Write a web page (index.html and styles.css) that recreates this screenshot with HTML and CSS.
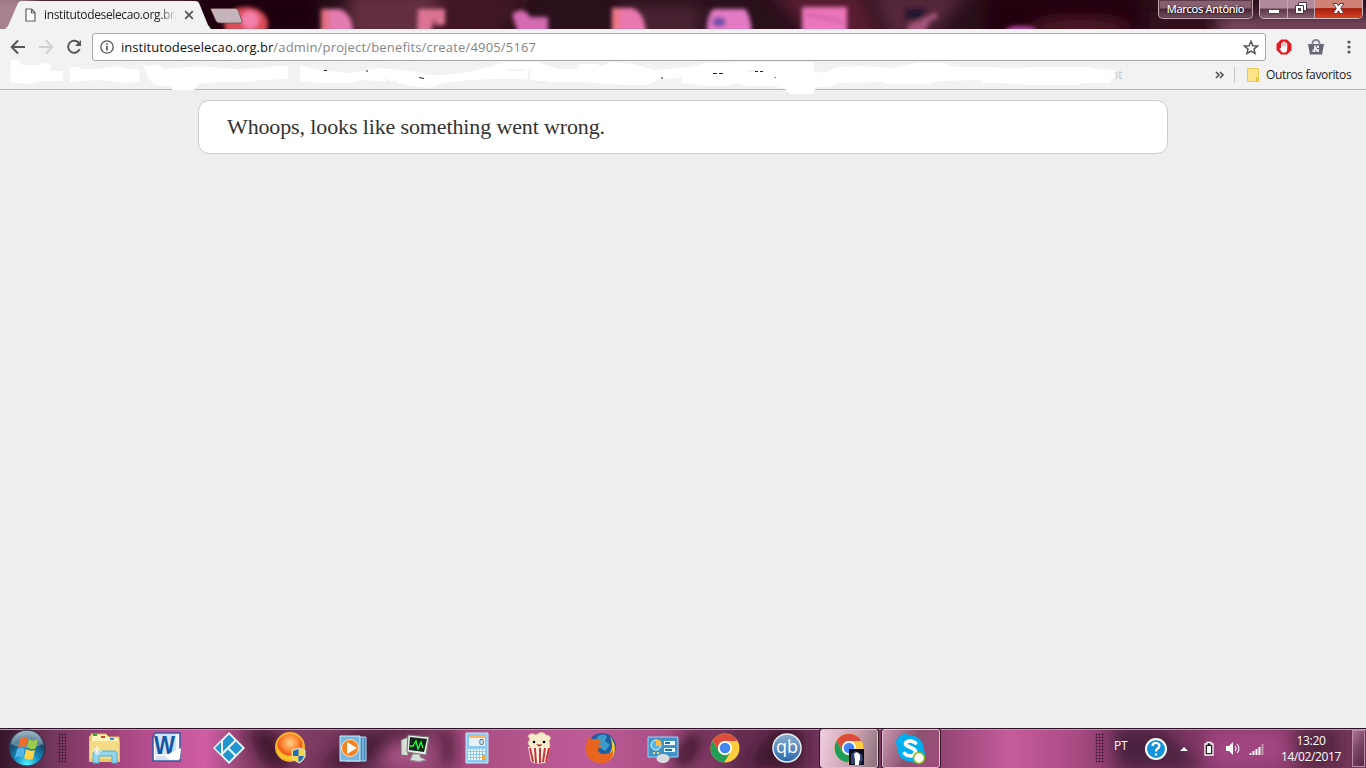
FILE: index.html
```html
<!DOCTYPE html>
<html lang="pt-BR">
<head>
<meta charset="utf-8">
<title>institutodeselecao.org.br</title>
<link rel="stylesheet" href="styles.css">
</head>
<body>
<header class="titlebar">
  <svg class="wallpaper" width="1366" height="29" viewBox="0 0 1366 29">
    <defs>
      <filter id="soft" x="-20%" y="-50%" width="140%" height="200%"><feGaussianBlur stdDeviation="2"/></filter>
      <filter id="wide" x="-20%" y="-50%" width="140%" height="200%"><feGaussianBlur stdDeviation="8"/></filter>
    </defs>
    <rect width="1366" height="29" fill="#29101b"/>
    <g filter="url(#wide)">
      <path d="M-20-10H30V40H-20z" fill="#a98291"/><path d="M30-10H200V8H30z" fill="#4c2938"/>
      <path d="M190-10H320V40H190z" fill="#1b020b"/><path d="M350-10H440L470 40H345z" fill="#642d40"/>
      <path d="M440-10H530L500 40H430z" fill="#411321"/><path d="M620 5H700V40H620z" fill="#482030"/>
      <path d="M770-10H860L880 40H815z" fill="#5a1b30"/><path d="M870-10H970L930 40H890z" fill="#55283a"/>
      <path d="M985-10H1140V40H985z" fill="#21040f"/><ellipse cx="1080" cy="29" rx="50" ry="9" fill="#521a2b"/>
      <path d="M1150 12H1250V40H1150z" fill="#34101f"/><path d="M1220 16H1380V40H1220z" fill="#794860"/>
    </g>
    <g filter="url(#soft)">
      <ellipse cx="246" cy="24" rx="22" ry="17" fill="#d94d58"/><circle cx="250" cy="20" r="9" fill="#f481ac"/>
      <path d="M321 9H340Q353 14 353 34H321z" fill="#e47caf"/><path d="M321 9H329V34H321z" fill="#e46f83"/>
      <path d="M418 9H445V25H435V17L430 34H417z" fill="#dc7594"/>
      <path d="M512 14Q524 5 530 17H548V34H518z" fill="#d46bb2"/>
      <path d="M612 8H632Q645 12 646 34H612z" fill="#e878ae"/><path d="M612 8H620V34H612z" fill="#ef7888"/>
      <path d="M713 9H745Q751 15 752 34H707Q706 16 713 9z" fill="#e47ac4"/><ellipse cx="719" cy="22" rx="7" ry="5" fill="#7150aa"/>
      <path d="M802 7H847V34H802z" fill="#ec76bb"/><path d="M806 15 824 17 843 22" stroke="#b85492" stroke-width="3" fill="none" opacity=".6"/>
      <path d="M906 9H927L920 19H905z" fill="#21182e"/><path d="M909 24 920 20 936 12 938 18 930 21 925 32H907z" fill="#a25578"/>
      <ellipse cx="1021" cy="30" rx="15" ry="4" fill="#b749a0"/>
    </g>
  </svg>
  <div class="tab">
    <svg class="tab-shape" width="214" height="29"><path d="M5 29 8 26 18 3Q19 1 22 1H195Q198 1 199 3L208 25 211 29z" fill="#f2f2f2"/></svg>
    <svg class="page-icon" width="11" height="14" viewBox="0 0 11 14"><path d="M1 1H6.500L10 4.500V13H1zM6.500 1V5H10" fill="#fff" stroke="#606060" stroke-width="1.200"/></svg>
    <span class="tab-title">institutodeselecao.org.br/</span>
    <svg class="tab-close" width="10" height="10" viewBox="0 0 10 10"><path d="M1.200 1.200 8.800 8.800M8.800 1.200 1.200 8.800" stroke="#5a5a5a" stroke-width="1.900"/></svg>
  </div>
  <svg class="new-tab" width="34" height="16"><path d="M2 .5H25Q27 .5 28 2L32 13Q33 15 30 15H10Q7 15 6 13L1 2Q0 .5 2 .5z" fill="#c5b4bb" stroke="#68434b" stroke-width=".7"/></svg>
  <div class="user-button">Marcos Antônio</div>
  <div class="window-controls">
    <span class="control minimize"><svg width="12" height="5"><path d="M.5.5H11.500V4.500H.5z" fill="#fff" stroke="#51464e"/></svg></span>
    <span class="control restore"><svg width="12" height="12"><path d="M3.500.5H11.500V8.500H3.500z" fill="#fff" stroke="#463944"/><path d="M.5 3.500H8.500V11.500H.5z" fill="#fff" stroke="#463944"/><path d="M3 6H6V9H3z" fill="#54434d"/></svg></span>
    <span class="control close"><svg width="13" height="11"><path d="M1 .5H5L6.500 3 8 .5H12L8.700 5.300 12 10.500H8L6.500 7.800 5 10.500H1L4.300 5.300z" fill="#fff" stroke="#5c4047"/></svg></span>
  </div>
</header>
<section class="browser-chrome">
  <div class="toolbar">
    <svg class="nav-icon back" width="16" height="16" viewBox="0 0 16 16"><path d="M15 8H2M8 1.500 1.700 8 8 14.500" fill="none" stroke="#555" stroke-width="2"/></svg>
    <svg class="nav-icon forward" width="16" height="16" viewBox="0 0 16 16"><path d="M1 8H14M8 1.500 14.300 8 8 14.500" fill="none" stroke="#d1d1d1" stroke-width="2"/></svg>
    <svg class="nav-icon reload" width="16" height="16" viewBox="0 0 16 16"><path d="M13.300 4.700A6 6 0 1 0 13.700 10" fill="none" stroke="#555" stroke-width="2"/><path d="M15 1V7H9z" fill="#555"/></svg>
    <div class="omnibox">
      <svg width="14" height="14" viewBox="0 0 14 14"><circle cx="7" cy="7" r="6.200" fill="none" stroke="#555" stroke-width="1.300"/><path d="M7 6V10.500M7 3.200V4.800" stroke="#555" stroke-width="1.700"/></svg>
      <span class="address">institutodeselecao.org.br<span class="address-path">/admin/project/benefits/create/4905/5167</span></span>
      <svg class="star" width="16" height="15" viewBox="0 0 16 15"><path d="M8 1.300 9.900 5.700 14.500 6 11 9.100 12.100 13.500 8 11.100 3.900 13.500 5 9.100 1.500 6 6.100 5.700z" fill="none" stroke="#555" stroke-width="1.500"/></svg>
    </div>
    <svg class="adblock" width="16" height="16" viewBox="0 0 16 16"><path d="M5 .5H11L15.500 5V11L11 15.500H5L.5 11V5z" fill="#e21b23"/><path d="M6 13.500 3.500 9.500Q3.800 8.400 5 9.500V4.500Q5.600 3.500 6.200 4.500V7.500H6.500V3Q7.200 2 7.800 3V7.500H8.200V2.800Q9 2 9.500 3V7.500H9.900V4Q10.700 3.300 11.200 4.300V10Q11 12.500 9.800 13.500z" fill="#fff"/></svg>
    <svg class="bag" width="16" height="16" viewBox="0 0 16 16"><path d="M0 5H16L14 15.500H2z" fill="#666674"/><path d="M4.500 6V4Q5 1 8 1T11.500 4V6" fill="none" stroke="#858590" stroke-width="1.800"/><path d="M6 6.500H8V8H9V6.500H11V9H9V10H11V13H8.500V11.500H7.500V13H4.500V10.500H6z" fill="#e7e7ea"/></svg>
    <svg class="dots" width="4" height="14"><circle cx="2" cy="2" r="1.600" fill="#555"/><circle cx="2" cy="7" r="1.600" fill="#555"/><circle cx="2" cy="12" r="1.600" fill="#555"/></svg>
  </div>
  <div class="bookmarks">
    <svg class="chevrons" width="10" height="8"><path d="M1 1 4 4 1 7M5 1 8 4 5 7" stroke="#555" stroke-width="1.700" fill="none"/></svg>
    <span class="divider"></span>
    <svg class="folder" width="13" height="15"><path d="M.5.5H11.500V13.500H.5z" fill="#ffe38b" stroke="#edc94f"/><path d="M9.500 9.500H11.500V13.500H9.500z" fill="#ffe388" stroke="#e8bd35"/></svg>
    <span class="bookmark-label">Outros favoritos</span>
  </div>
  <svg class="redactions" width="1366" height="100" viewBox="0 0 1366 100">
    <text x="1111" y="79" class="faint-label">ot</text>
    <g fill="#fff">
      <path d="M11 60 19 60 22 65H40L42 63 51 64V71H63L62 81H42L27 84 10 82z"/>
      <path d="M70 67H79V69H96L117 66 128 69H139L140 81 129 83 98 80 70 82z"/>
      <path d="M144 66 158 65 164 69 200 66 235 69 262 68 276 66H288V79L260 80 247 82H215L199 84 194 90H172L171 86H157L148 79z"/>
      <path d="M300 65 318 70 349 73 381 68 418 72 428 75H444L463 73 489 67 506 62 537 62 558 69H579V64H596L602 66 612 62 633 64 655 70 690 67 706 63 762 62H814V71L824 73 838 67 861 66 895 68 917 63H945L954 67 990 67 1014 68 1031 67 1090 67 1094 69 1114 70H1115V79H1111V83H1083L1078 85H1029L1000 83 981 83V80L940 81 928 84H888L881 82 837 83 829 87H817L812 94H790L785 89 773 86H746L738 83 726 86H704L682 83V78L661 79 648 85H622L605 84 585 82H550L520 79H493L470 80 444 83 428 88 411 86 393 82 365 80 350 83H322L300 81z"/>
    </g>
    <path d="M508 70H524M529 70V81M747 71H757M385 79Q390 84 397 81M535 81Q542 85 548 81" fill="none" stroke="#e8e8e8"/>
    <path d="M324 70.500H327M367 70V72M419 77.500 424 78.500M713 73.500H717M719 73.500H723M755 71.500H758M760 71.500H763M775 77V78M661 78H663" fill="none" stroke="#202030"/>
  </svg>
</section>
<main class="content"><h1 class="error-card"><span class="error-text">Whoops, looks like something went wrong.</span></h1></main>
<footer class="taskbar">
  <svg class="wallpaper" width="1366" height="40" viewBox="0 0 1366 40">
    <defs><linearGradient id="bar"><stop offset="0" stop-color="#34152a"/><stop offset=".035" stop-color="#70355a"/><stop offset=".09" stop-color="#a84681"/><stop offset=".15" stop-color="#d15ea5"/><stop offset=".18" stop-color="#8c426d"/><stop offset=".28" stop-color="#6d3457"/><stop offset=".34" stop-color="#a84e82"/><stop offset=".43" stop-color="#be5b97"/><stop offset=".49" stop-color="#a84e83"/><stop offset=".54" stop-color="#642d50"/><stop offset=".67" stop-color="#803b65"/><stop offset=".74" stop-color="#c65c9c"/><stop offset=".79" stop-color="#a84a82"/><stop offset=".83" stop-color="#6f315a"/><stop offset=".9" stop-color="#863b6a"/><stop offset="1" stop-color="#713657"/></linearGradient></defs>
    <rect width="1366" height="40" fill="url(#bar)"/>
    <g filter="url(#wide)"><path d="M245 0H275L295 42H265z" fill="#40162f"/><path d="M315 42 350 8 400 0H445L350 42z" fill="#4a1e38"/><path d="M390 15H428V40H380z" fill="#ab5387"/><path d="M442 0H453V40H442z" fill="#40192e"/><path d="M687 5H706L690 40H670zM745 40 773 0H803V40z" fill="#3a152b"/><path d="M1112 0H1160L1205 40H1118z" fill="#4c2040"/><path d="M1207 0H1288V40H1210z" fill="#a14580"/><path d="M1293 0H1340V40H1300z" fill="#562742"/></g>
    <path d="M0 .5H1366" stroke="#2c1025"/><path d="M0 1.500H1366" stroke="#cf8eb0"/>
  </svg>
  <svg class="start" width="40" height="40" viewBox="0 0 40 40"><defs><radialGradient id="orb" cx=".5" cy=".95" r=".95"><stop stop-color="#4df7ff"/><stop offset=".35" stop-color="#168fc5"/><stop offset=".7" stop-color="#174969"/><stop offset="1" stop-color="#91a5b5"/></radialGradient></defs><circle cx="20" cy="20" r="18" fill="url(#orb)" stroke="#332a42"/><path d="M4 16Q8 3 20 3T36 16Q20 24 4 16z" fill="#d7edf4" opacity=".35"/><path d="M13 11Q17 8 21 10L19 19Q15 17 11 20z" fill="#f16b2d"/><path d="M22 11Q26 14 31 11L29 20Q24 23 20 19z" fill="#9bcc4b"/><path d="M10 21Q14 18 18 21L16 30Q12 27 8 30z" fill="#50b6ed"/><path d="M19 21Q24 24 28 22L26 31Q21 33 17 30z" fill="#ffd34b"/></svg>
  <span class="grip"></span>
  <nav class="apps">
    <span class="app"><svg width="34" height="34" viewBox="0 0 34 34"><path d="M1 5 8 4 9 6H29L32 10V31H1z" fill="#eac765"/><path d="M3 3H18L21 6H31V27H3z" fill="#fff3ba" stroke="#d8b954"/><path d="M5 4H9" stroke="#22a634" stroke-width="2"/><path d="M13 6H17" stroke="#d84622" stroke-width="2"/><path d="M22 8H26" stroke="#2b91d3" stroke-width="2"/><path d="M2 10H31V28H2z" fill="#f3dc85"/><path d="M5 32V23Q5 20 8 20H26Q29 20 29 23V32H24V25H11V32z" fill="#91d4ec" stroke="#5aafc9"/><path d="M9 15V24M5 20H14M6 17 12 23M12 17 6 23" stroke="#fff" stroke-width="1"/></svg></span>
    <span class="app"><svg width="32" height="32" viewBox="0 0 32 32"><path d="M4 1H29V29H2V5z" fill="#f2f6fd" stroke="#365aa0" stroke-width="1.500"/><path d="M4 2H25V22H4z" fill="#d3e3f8"/><text x="3" y="22" class="word-logo" textLength="21" lengthAdjust="spacingAndGlyphs">W</text><path d="M5 25H20M5 27H18" stroke="#b7c9e6"/><path d="M14 25 19 21 30 16 29 27 20 28z" fill="#fff"/></svg></span>
    <span class="app"><svg width="32" height="32" viewBox="0 0 32 32"><path d="M16 0 32 16 16 32 0 16z" fill="#eef8fc"/><path d="M2 16 8 10V22zM10 8.500 16 2.500 21.500 8 10 19.500zM23 9.500 29.500 16 23 22.500 16.500 16zM10 22.500 15 17.500 21.500 24 16 29.500 10 23.500z" fill="#2496cf"/></svg></span>
    <span class="app"><svg width="32" height="32" viewBox="0 0 32 32"><defs><radialGradient id="sun" cx=".5" cy=".35"><stop stop-color="#ffd28b"/><stop offset=".55" stop-color="#ff8b38"/><stop offset=".85" stop-color="#ee5818"/><stop offset="1" stop-color="#ffc62a"/></radialGradient></defs><circle cx="15" cy="15" r="14" fill="url(#sun)" stroke="#f2b52b" stroke-width="2"/><path d="M17 18 24 16 30 18V25Q27 30 24 31 18 28 17 25z" fill="#f0d848" stroke="#d7dfe6"/><path d="M18 19 23.500 17V24H18zM23.500 24H29Q27 29 23.500 30z" fill="#236bbf"/></svg></span>
    <span class="app"><svg width="30" height="30" viewBox="0 0 30 30"><path d="M8 4H28V28H8z" fill="#4486ba" stroke="#a5ddf7"/><path d="M25 4V28" stroke="#a5ddf7"/><path d="M2 3H22V28H2z" fill="#78b7df" stroke="#cbedff"/><circle cx="12" cy="15" r="8.500" fill="#f58220" stroke="#ffe1bd"/><path d="M9 9 19 15 9 21z" fill="#fff"/></svg></span>
    <span class="app"><svg width="32" height="32" viewBox="0 0 32 32"><path d="M2 8 9 5V24L2 23z" fill="#d8ddd4" stroke="#696c68"/><path d="M9 3 30 5 27 23 8 20z" fill="#ebece8" stroke="#777"/><path d="M11 5 28 7 25 20 10 18z" fill="#102618"/><path d="M11 14 14 14 17 9 19 17 22 10 24 16" fill="none" stroke="#30ff38" stroke-width="1.300"/><path d="M14 22H21V25L27 28Q20 31 11 28z" fill="#d7ddd9" stroke="#929691"/></svg></span>
    <span class="app"><svg width="26" height="32" viewBox="0 0 26 32"><path d="M2 1H24V31H2z" fill="#8ccaf0" stroke="#c4edff"/><path d="M5 4H21V8H5z" fill="#ffb95c"/><path d="M5 6H21V14H5z" fill="#e8f1f8"/><text x="15" y="13" class="calc-number">0</text><g stroke="#f5faff" stroke-width="2" stroke-dasharray="2 1"><path d="M4 18H21M4 21H21M4 24H21M4 27H21"/></g><path d="M18 23H21V28H18z" fill="#f9a52c"/></svg></span>
    <span class="app"><svg width="26" height="32" viewBox="0 0 26 32"><path d="M4 15 2 11 4 7 2 4Q5 0 10 3Q16-2 20 3Q27 4 23 9L24 14 21 18H4z" fill="#f7edcd" stroke="#dac59e"/><path d="M2 15H24L21 30Q13 33 5 30z" fill="#fff0e5"/><path d="M4 16 7 30M9 16 10 31M14 16V31M19 16 17 30M23 16 20 30" stroke="#c93535" stroke-width="2"/><circle cx="8" cy="10" r="1.300"/><circle cx="18" cy="10" r="1.300"/><path d="M10 12Q13 13 16 12 14 17 10 12z" fill="#b62c28"/></svg></span>
    <span class="app"><svg width="32" height="32" viewBox="0 0 32 32"><circle cx="17" cy="15" r="14" fill="#1f5f9f"/><path d="M12 5Q17 1 22 4L20 9 25 13 20 19 14 15z" fill="#3d9bcc"/><path d="M25 4Q35 18 25 28 15 34 6 27L9 23 20 24Q31 20 25 4z" fill="#f9c832"/><path d="M4 5Q6 8 10 7 14 6 16 10L13 13 17 14 13 17Q13 22 19 22 26 22 28 18 29 28 19 31 7 32 2 23-1 13 4 5z" fill="#e9651f"/></svg></span>
    <span class="app"><svg width="32" height="30" viewBox="0 0 32 30"><path d="M1 4H31V24H1z" fill="#4192c6" stroke="#93d8fa"/><circle cx="9" cy="12" r="5" fill="#58b5e2" stroke="#e6faff"/><path d="M9 6V13H14V8z" fill="#ffba45"/><path d="M17 10H28M17 17H28" stroke="#e9fbff" stroke-width="4"/><path d="M18 10H23M18 17H25" stroke="#2472a4" stroke-width="2"/><path d="M6 20H13" stroke="#f6dc67" stroke-width="2" stroke-dasharray="2 2"/><ellipse cx="16" cy="25.500" rx="6.500" ry="4.500" fill="#d8dcdd"/></svg></span>
    <span class="app"><svg width="30" height="30" viewBox="0 0 30 30"><g id="chrome"><circle cx="15" cy="15" r="14.500" fill="#ffcd3f"/><path d="M2.400 8A14.500 14.500 0 0 1 27.600 8H15A7 7 0 0 0 8.900 18.500z" fill="#dc4d3e"/><path d="M2.400 8 9 19A7 7 0 0 0 20 20L14 29.500A14.500 14.500 0 0 1 2.400 8z" fill="#209d56"/><circle cx="15" cy="15" r="7" fill="#fff"/><circle cx="15" cy="15" r="5.300" fill="#4285f4"/></g></svg></span>
    <span class="app"><svg width="32" height="32" viewBox="0 0 32 32"><defs><linearGradient id="qb" x2="0" y2="1"><stop stop-color="#8eafd1"/><stop offset="1" stop-color="#2868ae"/></linearGradient></defs><circle cx="16" cy="16" r="14" fill="url(#qb)" stroke="#e6ecf3" stroke-width="1.500"/><text x="5" y="21" class="qb-logo" textLength="22" lengthAdjust="spacingAndGlyphs">qb</text></svg></span>
    <span class="app active"><svg width="32" height="34" viewBox="0 0 32 34"><use href="#chrome" x="1" y="1"/><path d="M16 17H31V33H16z" fill="#080a18"/><path d="M18 22 22 19 29 22 30 28 27 32H18z" fill="#34406f"/><path d="M21 22Q24 18 27 23V28L26 29V33H22V28z" fill="#fff"/></svg></span>
    <span class="app running"><svg width="32" height="32" viewBox="0 0 32 32"><circle cx="10" cy="10" r="9" fill="#00aff0"/><circle cx="21" cy="21" r="9" fill="#00aff0"/><circle cx="15.500" cy="15.500" r="13" fill="#00aff0"/><path d="M20.500 10Q15 6 11 9.500C8 14 20.500 14 20.500 18.500 20.500 24 13 24 9.500 20.500" fill="none" stroke="#fff" stroke-width="3.800" stroke-linecap="round"/><circle cx="24" cy="25" r="5.500" fill="#fff" stroke="#82b91e" stroke-width="1.500"/></svg></span>
  </nav>
  <span class="grip tray-grip"></span>
  <span class="language">PT</span>
  <svg class="help" width="24" height="24"><circle cx="12" cy="12" r="10" fill="#1293dc" stroke="#fff" stroke-width="2"/><path d="M8.500 9Q9 5.500 12.500 6 17 7 14.500 11 12 12 12 14.500M12 16.500V18.500" fill="none" stroke="#fff" stroke-width="2.300"/></svg>
  <svg class="tray-arrow" width="8" height="5"><path d="M4 0 8 4H0z" fill="#fff"/></svg>
  <svg class="battery" width="10" height="15"><path d="M3 1.500H7V3H9V14H1V3H3z" fill="#31192a" stroke="#fff" stroke-width="1.300"/><path d="M3 5H7V12H3z" fill="#fff"/></svg>
  <svg class="sound" width="16" height="15"><path d="M1 5H4L8 1V14L4 10H1z" fill="#fff"/><path d="M10 5Q12 7.500 10 10M12 3Q16 7.500 12 12" stroke="#fff" fill="none" stroke-width="1.100"/></svg>
  <svg class="signal" width="16" height="13"><path d="M1.500 10V12M4.500 8V12M7.500 6V12M10.500 4V12" stroke="#fff" stroke-width="2"/><path d="M13.500 1V12" stroke="#c197ad" stroke-width="2"/></svg>
  <div class="clock"><span class="time">13:20</span><span class="date">14/02/2017</span></div>
  <span class="desktop-button"></span>
</footer>
</body>
</html>
```

FILE: styles.css
```css
* { box-sizing: border-box; }
body { margin: 0; width: 1366px; height: 768px; overflow: hidden; display: flex; flex-direction: column; background: #eee; font: 12px "Open Sans", sans-serif; color: #222; }
svg { display: block; flex-shrink: 0; }
.titlebar { height: 29px; position: relative; display: flex; flex-shrink: 0; align-items: flex-start; overflow: hidden; }
.wallpaper { position: absolute; inset: 0; }
.tab { width: 210px; height: 29px; position: relative; display: flex; align-items: center; padding-left: 25px; }
.tab-shape { position: absolute; left: 0; top: 0; }
.page-icon, .tab-title, .tab-close { position: relative; }
.tab-title { width: 133px; margin-left: 8px; line-height: 17px; white-space: nowrap; letter-spacing: -.37px; mask-image: linear-gradient(90deg, #000 86%, transparent); }
.tab-close { margin-left: 7px; }
.new-tab { position: relative; margin-top: 8px; }
.user-button { position: relative; width: 95px; height: 19px; margin-left: auto; margin-right: 6px; border: 1px solid #c4a9b4; border-top: 0; border-radius: 0 0 5px 5px; background: linear-gradient(#86606f 0 45%, #432332 50%, #755161); box-shadow: inset 0 0 0 1px #5b3947; color: white; text-align: center; font-size: 11px; line-height: 17px; letter-spacing: -.25px; text-shadow: 0 0 2px #000, 0 0 .4px #fff; }
.window-controls { position: relative; display: flex; height: 19px; width: 104px; margin-right: 3px; border: 1px solid #cfb6c1; border-top: 0; border-radius: 0 0 5px 5px; overflow: hidden; }
.control { display: flex; width: 28px; align-items: center; justify-content: center; background: linear-gradient(#b18b9b 0 45%, #5b3646 50%, #88606f); border-right: 1px solid #c4a2b1; }
.minimize svg { margin-top: 4px; }
.restore { width: 27px; padding-bottom: 2px; }
.close { flex: 1; border: 0; padding-bottom: 2px; background: linear-gradient(#cf8376 0 42%, #a61c0e 48%, #d64322); }
.browser-chrome { position: relative; height: 61px; flex-shrink: 0; background: #f2f2f2; border-bottom: 1px solid #b5b5b5; }
.toolbar { display: flex; height: 36px; padding-left: 10px; align-items: center; }
.forward { margin-left: 12px; }
.reload { margin-left: 12px; }
.omnibox { width: 1174px; height: 28px; margin-left: 10px; display: flex; align-items: center; border: 1px solid #a8a8a8; border-radius: 3px; background: #fff; padding: 0 7px; }
.address { margin-left: 7px; font-size: 13px; line-height: 20px; white-space: nowrap; color: #111; letter-spacing: .04px; }
.address-path { color: #858585; letter-spacing: .17px; }
.star { margin-left: auto; margin-right: -1px; }
.adblock { margin-left: 10px; }
.bag { margin-left: 16px; }
.dots { margin-left: 23px; }
.bookmarks { display: flex; height: 20px; align-items: center; padding-left: 1215px; }
.divider { width: 1px; height: 16px; background: #c4c4c4; margin-left: 9px; }
.folder { margin-left: 12px; }
.bookmark-label { margin-left: 6px; margin-top: -1px; letter-spacing: -.36px; white-space: nowrap; }
.redactions { position: absolute; left: 0; top: -29px; pointer-events: none; }
.faint-label { font: 12px "Open Sans", sans-serif; fill: #c3c6ce; }
.content { flex: 1; padding-top: 10px; }
.error-card { width: 970px; height: 54px; margin: 0 auto; padding: 0 28px; border: 1px solid #ccc; border-radius: 11px; background: #fff; color: #333; font: 22px/51px "Liberation Serif", serif; }
.error-text { letter-spacing: -.13px; }
.taskbar { position: relative; height: 40px; flex-shrink: 0; display: flex; align-items: center; overflow: hidden; color: #fff; }
.start, .grip, .apps, .language, .help, .tray-arrow, .battery, .sound, .signal, .clock, .desktop-button { position: relative; flex-shrink: 0; }
.start { margin-left: 7px; }
.grip { width: 9px; height: 30px; margin-left: 11px; background: radial-gradient(circle, #2b1027 .7px, transparent 1.1px) 0 0 / 3px 3px; }
.apps { display: flex; margin-left: 7px; height: 40px; }
.app { width: 62px; height: 40px; display: flex; align-items: center; justify-content: center; }
.active, .running { width: 58px; margin: 1px 2px 0; height: 39px; border: 1px solid #e1c0d1; border-radius: 3px; box-shadow: 0 0 0 1px #361c2b; }
.active { background: linear-gradient(105deg, #f1cfdf, #c69dac 60%, #877079); }
.running { background: linear-gradient(115deg, #c898ae, #8c5270 50%, #a04a7b); }
.word-logo { font: bold 25px "Liberation Sans", sans-serif; fill: #1556a5; }
.calc-number { font: 9px "Liberation Sans", sans-serif; fill: #315778; }
.qb-logo { font: 19px "Open Sans", sans-serif; fill: #fff; }
.tray-grip { margin-left: 153px; }
.language { width: 14px; margin-left: 10px; line-height: 16px; margin-top: -5px; letter-spacing: -.3px; }
.help { margin-left: 16px; margin-top: 2px; }
.tray-arrow { margin-left: 12px; margin-top: 2px; }
.battery { margin-left: 16px; margin-top: 1px; }
.sound { margin-left: 11px; margin-top: 1px; }
.signal { margin-left: 8px; margin-top: 2px; }
.clock { width: 62px; margin-left: 15px; display: flex; flex-direction: column; align-items: center; line-height: 17px; letter-spacing: -.35px; white-space: nowrap; }
.time { margin-bottom: -1px; }
.desktop-button { width: 13px; height: 37px; margin-left: auto; margin-right: 1px; border: 1px solid #bb8ba5; background: linear-gradient(120deg, #ad7594, #764362 50%, #572745); }
```
